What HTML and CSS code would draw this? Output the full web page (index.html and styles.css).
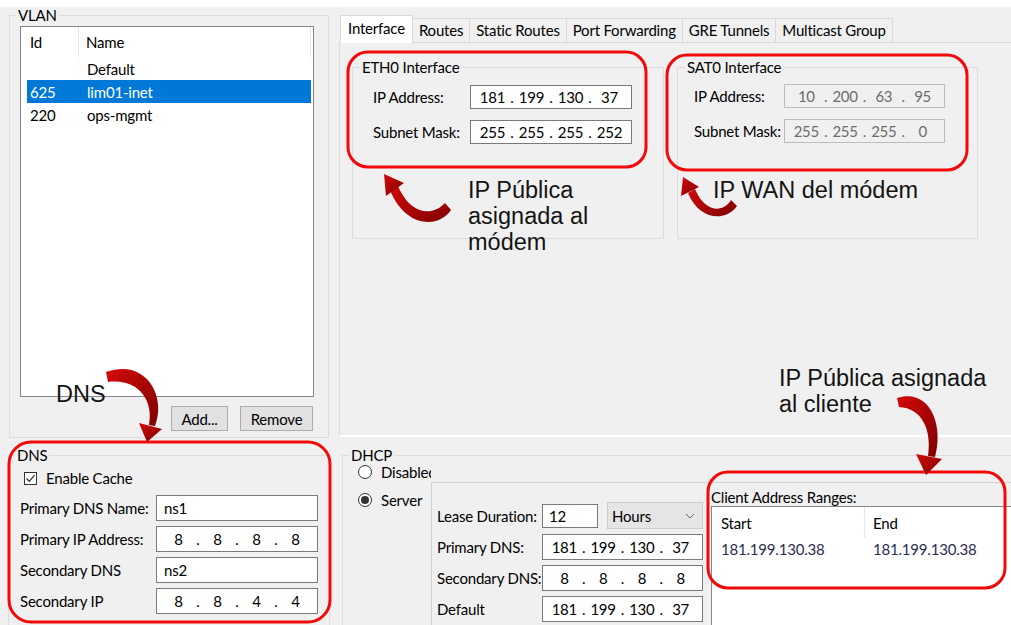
FILE: index.html
```html
<!DOCTYPE html>
<html lang="es">
<head>
<meta charset="utf-8">
<title>Router · Interfaces</title>
<link rel="stylesheet" href="styles.css">
</head>
<body>
<main class="app">
  <div class="topbar"></div>

  <fieldset class="group vlan">
    <legend>VLAN</legend>
    <div class="vlan-body">
      <div class="list vlan-list">
        <div class="list-head">
          <span class="vh-id">Id</span>
          <span class="vh-name">Name</span>
        </div>
        <div class="vrow"><span class="v-id"></span><span class="v-name">Default</span></div>
        <div class="vrow selected"><span class="v-id">625</span><span class="v-name">lim01-inet</span></div>
        <div class="vrow"><span class="v-id">220</span><span class="v-name">ops-mgmt</span></div>
      </div>
      <div class="button-row">
        <button class="btn btn-add" type="button">Add...</button>
        <button class="btn btn-remove" type="button">Remove</button>
      </div>
    </div>
  </fieldset>

  <section class="tabs">
    <nav class="tab-strip">
      <span class="tab active">Interface</span>
      <span class="tab">Routes</span>
      <span class="tab">Static Routes</span>
      <span class="tab">Port Forwarding</span>
      <span class="tab">GRE Tunnels</span>
      <span class="tab">Multicast Group</span>
    </nav>
    <div class="tab-page">
      <fieldset class="group iface eth0">
        <legend>ETH0 Interface</legend>
        <div class="iface-form">
          <span class="lbl">IP Address:</span>
          <div class="ip"><span>181</span><b>.</b><span>199</span><b>.</b><span>130</span><b>.</b><span>37</span></div>
          <span class="lbl">Subnet Mask:</span>
          <div class="ip"><span>255</span><b>.</b><span>255</span><b>.</b><span>255</span><b>.</b><span>252</span></div>
        </div>
      </fieldset>
      <fieldset class="group iface sat0">
        <legend>SAT0 Interface</legend>
        <div class="iface-form">
          <span class="lbl">IP Address:</span>
          <div class="ip disabled"><span>10</span><b>.</b><span>200</span><b>.</b><span>63</span><b>.</b><span>95</span></div>
          <span class="lbl">Subnet Mask:</span>
          <div class="ip disabled"><span>255</span><b>.</b><span>255</span><b>.</b><span>255</span><b>.</b><span>0</span></div>
        </div>
      </fieldset>
    </div>
  </section>

  <fieldset class="group dns">
    <legend>DNS</legend>
    <div class="dns-body">
      <div class="check-row">
        <span class="checkbox"><svg width="11" height="11" viewBox="0 0 11 11"><path d="M1.5 5.5 L4.3 8.3 L9.5 2.2" fill="none" stroke="#333" stroke-width="1.3"/></svg></span>
        <span>Enable Cache</span>
      </div>
      <div class="dns-form">
        <span class="lbl">Primary DNS Name:</span>
        <div class="field">ns1</div>
        <span class="lbl">Primary IP Address:</span>
        <div class="ip"><span>8</span><b>.</b><span>8</span><b>.</b><span>8</span><b>.</b><span>8</span></div>
        <span class="lbl">Secondary DNS</span>
        <div class="field">ns2</div>
        <span class="lbl">Secondary IP</span>
        <div class="ip"><span>8</span><b>.</b><span>8</span><b>.</b><span>4</span><b>.</b><span>4</span></div>
      </div>
    </div>
  </fieldset>

  <fieldset class="group dhcp">
    <legend>DHCP</legend>
    <div class="dhcp-body">
      <div class="modes">
        <div class="radio-row"><span class="radio"></span><span>Disabled</span></div>
        <div class="radio-row"><span class="radio on"></span><span>Server</span></div>
      </div>
      <div class="server-box">
        <div class="lease-form">
          <span class="lbl">Lease Duration:</span>
          <div class="lease">
            <div class="field short">12</div>
            <div class="select"><span>Hours</span><svg width="10" height="6" viewBox="0 0 10 6"><path d="M1 1 L5 5 L9 1" fill="none" stroke="#666" stroke-width="1"/></svg></div>
          </div>
          <span class="lbl">Primary DNS:</span>
          <div class="ip"><span>181</span><b>.</b><span>199</span><b>.</b><span>130</span><b>.</b><span>37</span></div>
          <span class="lbl">Secondary DNS:</span>
          <div class="ip"><span>8</span><b>.</b><span>8</span><b>.</b><span>8</span><b>.</b><span>8</span></div>
          <span class="lbl">Default</span>
          <div class="ip"><span>181</span><b>.</b><span>199</span><b>.</b><span>130</span><b>.</b><span>37</span></div>
        </div>
        <div class="ranges">
          <div class="ranges-label">Client Address Ranges:</div>
          <div class="list ranges-list">
            <div class="rhead"><span class="rh-start">Start</span><span class="rh-end">End</span></div>
            <div class="rrow"><span class="r-start">181.199.130.38</span><span class="r-end">181.199.130.38</span></div>
          </div>
        </div>
      </div>
    </div>
  </fieldset>

  <div class="notes">
    <svg class="marks" width="1011" height="625" viewBox="0 0 1011 625">
      <defs>
        <linearGradient id="dark-red" x1="0" y1="0" x2="1" y2="1">
          <stop offset="0" stop-color="#d40a0a"/>
          <stop offset="1" stop-color="#7e0000"/>
        </linearGradient>
      </defs>
      <g class="boxes" fill="none" stroke="#f20a0a" stroke-width="3">
        <rect x="348" y="52" width="298" height="115" rx="20"/>
        <rect x="667" y="55" width="300" height="115" rx="20"/>
        <rect x="9" y="442" width="321" height="180" rx="22"/>
        <rect x="708" y="472" width="297" height="116" rx="20"/>
      </g>
      <g class="arrows" fill="url(#dark-red)">
        <path d="M451,210 C439,228 406,229 390,190 L398,186 C411,216 433,216 445,203 Z"/>
        <path d="M386,196 L404,183 L384,174 Z"/>
        <path d="M737,206 C727,221 700,222 688,193 L695,189 C705,213 723,213 731,200 Z"/>
        <path d="M681,196 L699,187 L683,177 Z"/>
        <path d="M106,372 C145,358 167,395 155,426 L149,425 C154,399 137,378 108,382 Z"/>
        <path d="M139,423 L162,429 L147,442 Z"/>
        <path d="M897,398 C930,388 944,425 935,457 L928,456 C932,430 922,408 899,407 Z"/>
        <path d="M916,454 L942,459 L926,475 Z"/>
      </g>
    </svg>
    <p class="note note-eth0">IP Pública<br>asignada al<br>módem</p>
    <p class="note note-wan">IP WAN del módem</p>
    <p class="note note-dns">DNS</p>
    <p class="note note-client">IP Pública asignada<br>al cliente</p>
  </div>
</main>
</body>
</html>
```

FILE: styles.css
```css
* { box-sizing: border-box; }

html, body {
  margin: 0;
  padding: 0;
  background: #f0f0f0;
}

body {
  font-family: Lato, "Noto Sans", "DejaVu Sans", sans-serif;
  font-size: 15px;
  line-height: 16px;
  letter-spacing: -0.2px;
  color: #000;
}

.app {
  position: relative;
  width: 1011px;
  height: 625px;
  overflow: hidden;
  background: #f0f0f0;
  display: grid;
  grid-template-columns: 330px 681px;
  grid-template-rows: 7px 433px 185px;
}

.topbar {
  grid-column: 1 / -1;
  background: #fff;
}

/* group boxes */
.group {
  margin: 0;
  padding: 0;
  min-width: 0;
  border: 1px solid #dcdcdc;
}

.group > legend {
  margin-left: 6px;
  padding: 0 2px;
  line-height: 16px;
}

.lbl { white-space: nowrap; }

/* list views */
.list {
  background: #fff;
  border: 1px solid #828790;
  overflow: hidden;
}

/* VLAN */
.vlan {
  grid-column: 1;
  grid-row: 2;
  margin-left: 9px;
  width: 320px;
  height: 431px;
}

.vlan-body { padding: 3px 0 0 10px; }

.vlan-list {
  width: 294px;
  height: 371px;
}

.list-head {
  display: flex;
  height: 30px;
}

.list-head span {
  display: flex;
  align-items: center;
}

.vh-id {
  width: 58px;
  padding-left: 9px;
  border-right: 1px solid #e5e5e5;
}

.vh-name {
  width: 232px;
  padding-left: 7px;
  border-right: 1px solid #e5e5e5;
}

.vrow {
  display: flex;
  align-items: center;
  height: 23px;
  margin: 0 2px 0 6px;
}

.vrow.selected {
  background: #0078d7;
  color: #fff;
}

.v-id { width: 52px; padding-left: 3px; }
.v-name { padding-left: 8px; }

.button-row {
  display: flex;
  justify-content: flex-end;
  gap: 12px;
  margin-top: 9px;
  padding-right: 15px;
}

.btn {
  font: inherit;
  letter-spacing: inherit;
  color: #000;
  height: 25px;
  padding: 0;
  background: #e1e1e1;
  border: 1px solid #adadad;
}

.btn-add { width: 57px; }
.btn-remove { width: 73px; }

/* tab control */
.tabs {
  grid-column: 2;
  grid-row: 2;
  display: flex;
  flex-direction: column;
  padding: 8px 0 0 9px;
}

.tab-strip {
  display: flex;
  align-items: flex-end;
  height: 28px;
  position: relative;
  z-index: 1;
}

.tab {
  height: 25px;
  line-height: 23px;
  padding: 0 6px;
  margin-left: -1px;
  border: 1px solid #d9d9d9;
  background: #f0f0f0;
  white-space: nowrap;
}

.tab.active {
  height: 28px;
  line-height: 25px;
  padding: 0 7px;
  margin-left: 1px;
  background: #fff;
  border-bottom-color: #fff;
}

.tab-page {
  margin-top: -1px;
  height: 395px;
  display: flex;
  align-items: flex-start;
  gap: 13px;
  padding: 16px 0 0 12px;
  border: 1px solid #d9d9d9;
  border-right: 0;
  border-bottom: 2px solid #fff;
}

.iface { height: 180px; }
.eth0 { width: 312px; }
.sat0 { width: 301px; }
.iface > legend { margin-left: 7px; }

.iface-form {
  display: grid;
  grid-template-columns: 97px 162px;
  align-items: center;
  row-gap: 11px;
  padding: 10px 0 0 20px;
}

.sat0 .iface-form {
  grid-template-columns: 90px 161px;
  padding: 9px 0 0 16px;
}

/* address fields */
.ip {
  display: grid;
  grid-template-columns: 1fr 8px 1fr 8px 1fr 8px 1fr;
  align-items: center;
  text-align: center;
  height: 24px;
  padding: 0 6px;
  background: #fff;
  border: 1px solid #7a7a7a;
}

.ip b { font-weight: normal; }

.ip.disabled {
  background: #f0f0f0;
  border-color: #bdbdbd;
  color: #6d6d6d;
}

.field {
  display: flex;
  align-items: center;
  height: 26px;
  padding-left: 7px;
  background: #fff;
  border: 1px solid #7a7a7a;
}

/* DNS */
.dns {
  grid-column: 1;
  grid-row: 3;
  margin: 7px 0 0 8px;
  width: 322px;
  height: 190px;
}

.dns-body { padding: 8px 0 0 11px; }

.check-row {
  display: flex;
  align-items: center;
  gap: 9px;
  height: 14px;
  padding-left: 4px;
}

.checkbox {
  display: flex;
  align-items: center;
  justify-content: center;
  width: 13px;
  height: 13px;
  background: #fff;
  border: 1px solid #333;
}

.dns-form {
  display: grid;
  grid-template-columns: 136px 162px;
  grid-auto-rows: 26px;
  row-gap: 5px;
  align-items: center;
  margin-top: 10px;
}

.dns-form .ip { height: 26px; }

/* DHCP */
.dhcp {
  grid-column: 2;
  grid-row: 3;
  margin: 7px 0 0 12px;
  height: 190px;
  border-right: 0;
}

.dhcp-body {
  display: grid;
  grid-template-columns: 88px 1fr;
}

.modes {
  display: flex;
  flex-direction: column;
  gap: 14px;
  padding: 2px 0 0 15px;
  overflow: hidden;
}

.radio-row {
  display: flex;
  align-items: center;
  gap: 9px;
  height: 14px;
  white-space: nowrap;
}

.radio {
  flex: none;
  display: flex;
  align-items: center;
  justify-content: center;
  width: 14px;
  height: 14px;
  border-radius: 50%;
  background: #fff;
  border: 1px solid #333;
}

.radio.on::after {
  content: "";
  width: 8px;
  height: 8px;
  border-radius: 50%;
  background: #333;
}

.server-box {
  margin-top: 19px;
  height: 200px;
  display: grid;
  grid-template-columns: 271px 1fr;
  column-gap: 8px;
  border-top: 1px solid #d3d3d3;
  border-left: 1px solid #d3d3d3;
}

.lease-form {
  display: grid;
  grid-template-columns: 105px 161px;
  grid-auto-rows: 27px;
  row-gap: 4px;
  align-items: center;
  padding: 19px 0 0 5px;
}

.lease-form .ip { height: 26px; }

.lease {
  display: flex;
  align-items: center;
  gap: 9px;
}

.field.short {
  width: 56px;
  height: 24px;
  padding-left: 6px;
}

.select {
  display: flex;
  align-items: center;
  justify-content: space-between;
  width: 96px;
  height: 27px;
  padding: 0 7px 0 4px;
  background: #e5e5e5;
  border: 1px solid #cdcdcd;
}

.ranges { padding-top: 6px; }

.ranges-label { height: 16px; white-space: nowrap; }

.ranges-list {
  margin-top: 1px;
  height: 200px;
  border-right: 0;
}

.rhead {
  display: flex;
  height: 31px;
}

.rhead span {
  display: flex;
  align-items: center;
}

.rh-start {
  width: 153px;
  padding-left: 9px;
  border-right: 1px solid #e5e5e5;
}

.rh-end { padding-left: 8px; }

.rrow {
  display: flex;
  align-items: center;
  height: 22px;
  color: #2c2c52;
}

.r-start { width: 153px; padding-left: 9px; }
.r-end { padding-left: 8px; }

/* callouts drawn over the window */
.notes {
  position: absolute;
  inset: 0;
  pointer-events: none;
}

.marks {
  position: absolute;
  left: 0;
  top: 0;
}

.note {
  position: absolute;
  margin: 0;
  font-family: "Liberation Sans", Arial, sans-serif;
  font-size: 23.5px;
  line-height: 26px;
  letter-spacing: 0;
  color: #141414;
  white-space: nowrap;
}

.note-eth0 { left: 468px; top: 177px; }
.note-wan { left: 713px; top: 177px; }
.note-dns { left: 56px; top: 381px; }
.note-client { left: 779px; top: 365px; }
```
